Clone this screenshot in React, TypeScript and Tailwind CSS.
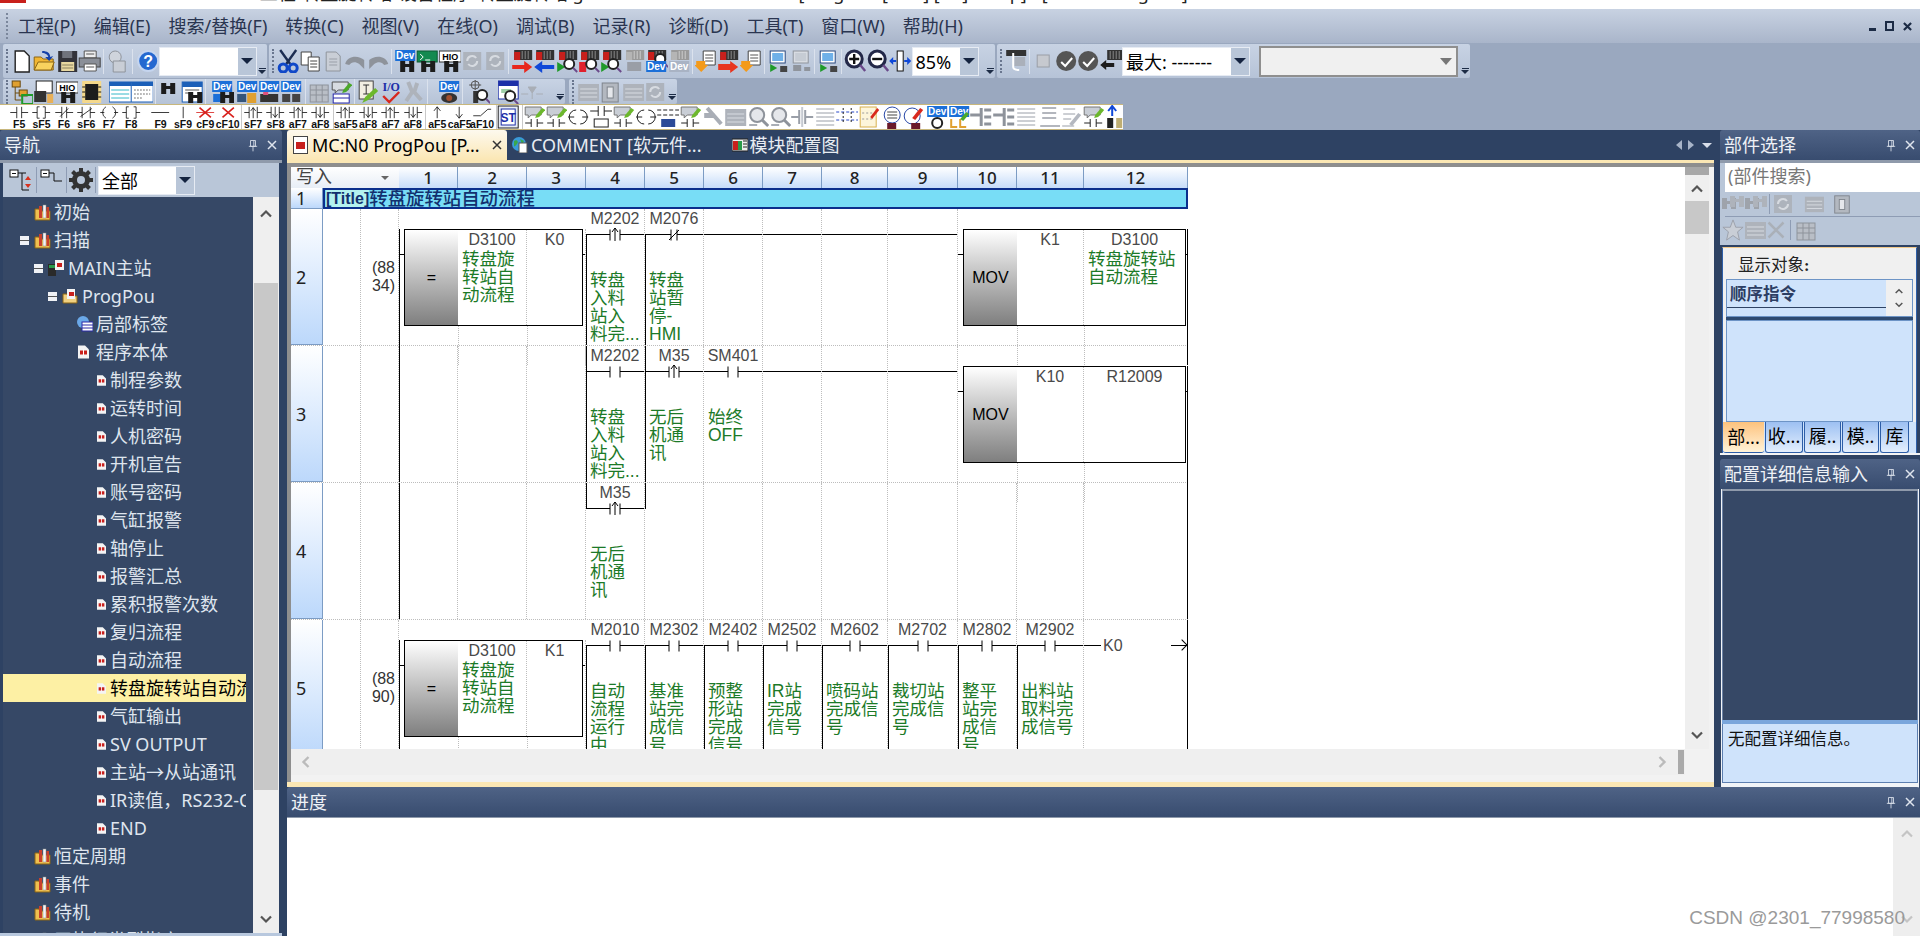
import type { ReactNode } from 'react';

// ---- toolbar icon parts ----
const Bino = ({ x = 4, y = 12, c = '#1c1c1c' }: { x?: number; y?: number; c?: string }) => (
  <g fill={c}>
    <rect x={x} y={y} width="5" height="11" />
    <rect x={x + 9} y={y} width="5" height="11" />
    <rect x={x + 4} y={y + 3} width="6" height="3" />
  </g>
);
const Dev = ({ x = 1, y = 1, c = '#1b6fd8' }: { x?: number; y?: number; c?: string }) => (
  <g>
    <rect x={x} y={y} width="20" height="11" fill={c} />
    <text x={x + 10} y={y + 9} fontSize="10" fontWeight="700" fill="#fff" textAnchor="middle" fontFamily="Liberation Sans">Dev</text>
  </g>
);
const Plc = ({ gray = false }: { gray?: boolean }) => (
  <g>
    <rect x="3" y="1" width="18" height="10" fill={gray ? '#9a9a9a' : '#333'} />
    <rect x="3" y="3" width="6" height="8" fill={gray ? '#b5b5b5' : '#c8201c'} />
    <path d="M11 2v8M14 2v8M17 2v8" stroke={gray ? '#ccc' : '#888'} />
  </g>
);
const GrayDoc = () => (
  <g>
    <path d="M4 3h10l4 4v15H4z" fill="#c9ced6" stroke="#8f949c" />
    <path d="M7 10h8M7 13h8M7 16h8" stroke="#9a9fa8" />
  </g>
);
const Mag = ({ x = 11, y = 12 }: { x?: number; y?: number }) => (
  <g>
    <circle cx={x} cy={y} r="5" fill="#fff" stroke="#222" strokeWidth="2" />
    <path d={`M${x + 4} ${y + 4}l4 4`} stroke="#6b4a8a" strokeWidth="2" />
  </g>
);
const Monitor = ({ gray = false }: { gray?: boolean }) => (
  <g>
    <rect x="3" y="2" width="15" height="12" fill={gray ? '#d8dce2' : '#fff'} stroke={gray ? '#8f949c' : '#2b4a80'} />
    <rect x="5" y="4" width="11" height="8" fill={gray ? '#c6ccd4' : '#6fb0e8'} />
    {gray ? <path d="M3 16h8v6H3zM14 18h6v4h-6z" fill="#8f949c" /> : <path d="M3 15v8l7-4z" fill="#1f9a2a" />}
    {!gray && <rect x="13" y="17" width="7" height="6" fill="#444" />}
  </g>
);
const OrangeDoc = () => (
  <g>
    <path d="M8 2h12v14H8z" fill="#fff" stroke="#444" />
    <path d="M10 6h8M10 9h8M10 12h8" stroke="#555" />
    <path d="M1 12h9v4h3l-7 7-7-7h2z" fill="#f39a1a" />
  </g>
);

const icons: Record<string, ReactNode> = {
  doc: <path d="M4 2h9l5 5v16H4z" fill="#fff" stroke="#222" strokeWidth="1.4" />,
  folder: (
    <g>
      <path d="M1 21V8h7l2 2h10v11z" fill="#f2b632" stroke="#8a6414" />
      <path d="M1 21l4-8h16l-3 8z" fill="#f9d25e" stroke="#8a6414" />
      <path d="M9 2c5 0 8 2 8 6l3-1-4 5-4-4 3 0c0-2-3-4-6-4z" fill="#1541a8" />
    </g>
  ),
  save: (
    <g>
      <rect x="2" y="2" width="19" height="21" fill="#33333a" />
      <rect x="5" y="13" width="13" height="9" fill="#e8d8a0" />
      <path d="M6 16h11M6 19h11" stroke="#8a8060" />
      <rect x="6" y="2" width="10" height="7" fill="#70737c" />
    </g>
  ),
  print: (
    <g>
      <path d="M6 2h12v7H6z" fill="#eee" stroke="#555" />
      <rect x="1" y="9" width="21" height="9" fill="#8a8f98" stroke="#444" />
      <path d="M6 15h12v7H6z" fill="#fff" stroke="#555" />
      <path d="M8 5h8M8 18h8" stroke="#555" />
    </g>
  ),
  gdoc: <GrayDoc />,
  gclock: (
    <g>
      <circle cx="9" cy="8" r="6" fill="#cfd4dc" stroke="#8f949c" />
      <path d="M7 12h12v11H7z" fill="#c9ced6" stroke="#8f949c" />
    </g>
  ),
  help: (
    <g>
      <circle cx="11" cy="12" r="10" fill="#2468d0" stroke="#c5d5ef" strokeWidth="2" />
      <text x="11" y="18" fontSize="16" fontWeight="700" fill="#fff" textAnchor="middle" fontFamily="Liberation Sans">?</text>
    </g>
  ),
  cut: (
    <g>
      <path d="M3 1l10 14M19 1L9 15" stroke="#1c2d52" strokeWidth="2.4" />
      <circle cx="6" cy="19" r="4" fill="none" stroke="#1048c8" strokeWidth="3" />
      <circle cx="16" cy="19" r="4" fill="none" stroke="#1048c8" strokeWidth="3" />
    </g>
  ),
  copy: (
    <g>
      <path d="M2 3h10v13H2z" fill="#fff" stroke="#444" />
      <path d="M9 8h11v14H9z" fill="#fff" stroke="#444" />
      <path d="M11 12h7M11 15h7M11 18h7" stroke="#444" />
    </g>
  ),
  gundo: <path d="M1 15c2-9 14-9 19-4v9l-5-5c-4-3-8-2-10 1l-4-1z" fill="#8e939b" />,
  gredo: <path d="M21 15c-2-9-14-9-19-4v9l5-5c4-3 8-2 10 1l4-1z" fill="#8e939b" />,
  devBino: (<g><Dev /><Bino x={6} /></g>),
  devBlue: (<g><Dev /><rect x="2" y="14" width="9" height="8" fill="#1b6fd8" /><Bino x={9} /></g>),
  green: (
    <g>
      <rect x="1" y="2" width="20" height="11" fill="#148a50" stroke="#0c5a33" />
      <path d="M4 5l3 3-3 3M9 11h5" stroke="#fff" fill="none" />
      <Bino x={5} />
    </g>
  ),
  hio: (
    <g>
      <rect x="0" y="2" width="22" height="11" fill="#fff" stroke="#333" />
      <text x="11" y="11" fontSize="9" fontWeight="700" textAnchor="middle" fontFamily="Liberation Sans">HIO</text>
      <Bino x={5} />
    </g>
  ),
  gcycle: (
    <g>
      <rect x="2" y="3" width="18" height="18" fill="#adb3bc" />
      <path d="M6 12a5 5 0 0 1 9-3M16 12a5 5 0 0 1-9 3" stroke="#d7dbe1" strokeWidth="2" fill="none" />
    </g>
  ),
  plcRed: (<g><Plc /><path d="M1 16h12v-4l8 6-8 6v-4H1z" fill="#e8281e" /></g>),
  plcBlue: (<g><Plc /><path d="M21 16H9v-4l-8 6 8 6v-4h12z" fill="#1048d8" /></g>),
  plcMag: (<g><Plc /><path d="M1 13v10l8-5z" fill="#1f9a2a" /><Mag x={13} y={15} /></g>),
  plcMag2: (<g><Plc /><rect x="1" y="13" width="7" height="10" fill="#e0202c" /><Mag x={13} y={15} /></g>),
  plcGray: (<g><Plc gray /><rect x="4" y="13" width="14" height="9" fill="#9a9ea6" /></g>),
  devPlc: (<g><Plc /><Mag x={15} y={10} /><Dev y={12} /></g>),
  devGray: (<g><Plc gray /><Dev y={12} c="#a9b3c4" /></g>),
  orange: <OrangeDoc />,
  redPlc: (
    <g>
      <Plc />
      <path d="M1 15h12v-3l8 6-8 6v-3H1z" fill="#e8341e" />
    </g>
  ),
  monitor: <Monitor />,
  gmonitor: <Monitor gray />,
  zoomIn: (
    <g>
      <circle cx="10" cy="10" r="8" fill="#fff" stroke="#232848" strokeWidth="3" />
      <path d="M5 10h10M10 5v10" stroke="#111" strokeWidth="2.4" />
      <path d="M16 16l5 6" stroke="#6b4a8a" strokeWidth="2.4" />
    </g>
  ),
  zoomOut: (
    <g>
      <circle cx="10" cy="10" r="8" fill="#fff" stroke="#232848" strokeWidth="3" />
      <path d="M5 10h10" stroke="#111" strokeWidth="2.4" />
      <path d="M16 16l5 6" stroke="#6b4a8a" strokeWidth="2.4" />
    </g>
  ),
  fit: (
    <g>
      <rect x="8" y="2" width="6" height="20" fill="#fff" stroke="#111" />
      <path d="M0 12l4-4v3h3v2H4v3zM22 12l-4-4v3h-3v2h3v3z" fill="#1048d8" />
    </g>
  ),
  link: (
    <g>
      <rect x="1" y="1" width="20" height="6" fill="#333" />
      <rect x="9" y="8" width="11" height="9" fill="#aab0ba" />
      <path d="M8 4v14c0 3 3 3 6 3" stroke="#fff" strokeWidth="2" fill="none" />
    </g>
  ),
  gsquare: <rect x="5" y="6" width="12" height="12" fill="#c6c9cf" stroke="#9a9ea6" />,
  check: (
    <g>
      <circle cx="11" cy="12" r="10" fill="#555" />
      <path d="M6 13l4 4 7-8" stroke="#fff" strokeWidth="2" fill="none" />
    </g>
  ),
  plcArrow: (
    <g>
      <rect x="7" y="1" width="15" height="10" fill="#333" />
      <path d="M10 2v8M13 2v8M16 2v8M19 2v8" stroke="#888" />
      <path d="M0 16l6-5v3h8v4H6v3z" fill="#1c1c1c" />
    </g>
  ),
  tree: (
    <g>
      <rect x="1" y="1" width="8" height="6" fill="#e0a030" stroke="#6a4a10" />
      <rect x="8" y="10" width="8" height="6" fill="#e0a030" stroke="#6a4a10" />
      <path d="M4 7v13h6M4 13h4" stroke="#6a4a10" fill="none" />
      <rect x="11" y="15" width="11" height="9" fill="none" stroke="#1f9a2a" strokeWidth="2" />
    </g>
  ),
  printer2: (
    <g>
      <rect x="3" y="1" width="16" height="12" fill="#fff" stroke="#222" />
      <rect x="1" y="11" width="12" height="11" fill="#333" />
      <rect x="14" y="14" width="6" height="9" fill="#e8b058" />
    </g>
  ),
  chip: (
    <g>
      <rect x="2" y="1" width="19" height="22" fill="#f4d88a" />
      <rect x="5" y="4" width="13" height="16" fill="#1c1c1c" />
      <path d="M2 7h3M2 12h3M2 17h3M18 7h3M18 12h3M18 17h3" stroke="#1c1c1c" />
    </g>
  ),
  tableA: (
    <g>
      <rect x="0" y="2" width="22" height="20" fill="#fff" stroke="#1b5fb8" />
      <rect x="0" y="2" width="22" height="4" fill="#1b5fb8" />
      <path d="M2 10h18M2 14h18M2 18h18" stroke="#35b8c8" />
    </g>
  ),
  tableB: (
    <g>
      <rect x="0" y="2" width="22" height="20" fill="#fff" stroke="#1b5fb8" />
      <rect x="0" y="2" width="22" height="4" fill="#1b5fb8" />
      <path d="M3 10h16M3 14h16M3 18h9" stroke="#555" strokeDasharray="1.5 1.5" />
    </g>
  ),
  bino: <Bino x={3} y={3} />,
  gbino: (<g><Bino x={0} y={6} c="#9ea3ab" /><Bino x={8} y={4} c="#aeb3bb" /></g>),
  winBino: (
    <g>
      <rect x="1" y="2" width="20" height="20" fill="#fff" stroke="#1b5fb8" />
      <rect x="1" y="2" width="20" height="5" fill="#1b5fb8" />
      <path d="M4 10h14M4 13h6" stroke="#555" />
      <Bino x={7} y={12} />
    </g>
  ),
  dev3: (<g><Dev /><rect x="1" y="14" width="9" height="8" fill="#35557a" /><rect x="11" y="13" width="9" height="10" fill="#e0a030" /></g>),
  dev4: (<g><Dev /><rect x="2" y="14" width="18" height="8" fill="#333" /><rect x="5" y="12" width="5" height="3" fill="#e0507a" /></g>),
  dev5: (<g><Dev /><rect x="2" y="14" width="8" height="8" fill="#444" /><rect x="12" y="14" width="8" height="8" fill="#444" /></g>),
  gtable: (<g><rect x="2" y="5" width="18" height="17" fill="#b9bec6" stroke="#8e939b" /><path d="M2 10h18M2 15h18M8 5v17M14 5v17" stroke="#8e939b" /></g>),
  note: (
    <g>
      <path d="M2 2h16v8H8l-3 3v-3H2z" fill="#d7dbe1" stroke="#555" />
      <rect x="3" y="14" width="16" height="9" fill="#fff" stroke="#2828a8" />
      <path d="M3 18h16" stroke="#2828a8" />
      <path d="M13 10l6-7 3 2-6 7-4 1z" fill="#4ca82a" />
    </g>
  ),
  edit: (
    <g>
      <rect x="2" y="1" width="14" height="18" fill="#f2efe2" stroke="#444" />
      <path d="M6 5h6M9 5v9M6 14h6" stroke="#333" />
      <path d="M5 23l3-6 10-9 3 3-10 9z" fill="#6cb82c" />
    </g>
  ),
  io: (
    <g>
      <text x="11" y="11" fontSize="12" fontWeight="700" fill="#1c2fa8" textAnchor="middle" fontFamily="Liberation Serif">I/O</text>
      <path d="M3 16l6 6 10-10" stroke="#d8281e" strokeWidth="2.4" fill="none" />
    </g>
  ),
  gtool: (<g><path d="M6 2l4 10-6 9M15 3l-3 9 7 8" stroke="#aeb3bb" strokeWidth="4" fill="none" /></g>),
  devEye: (<g><Dev /><ellipse cx="11" cy="18" rx="8" ry="5" fill="#333" /><circle cx="11" cy="18" r="3" fill="#a05030" /></g>),
  probe: (
    <g>
      <circle cx="7" cy="5" r="4" fill="none" stroke="#555" />
      <path d="M1 5h12M7 0v10" stroke="#555" />
      <rect x="5" y="11" width="5" height="12" fill="#333" />
      <Mag x={14} y={15} />
    </g>
  ),
  winMag: (
    <g>
      <rect x="0" y="1" width="20" height="18" fill="#fff" stroke="#1c2fa8" />
      <rect x="0" y="1" width="20" height="5" fill="#1c2fa8" />
      <rect x="3" y="9" width="10" height="4" fill="#9fd0a8" />
      <Mag x={12} y={16} />
    </g>
  ),
  gline: <path d="M0 14h7M15 14h7M7 7h8l-4 6zM11 13v6" stroke="#a9aeb6" fill="#a9aeb6" />,
  gbars: (<g><rect x="1" y="4" width="21" height="17" fill="#aeb3bb" /><path d="M3 9h17M3 13h17M3 17h17" stroke="#d8dce2" /></g>),
  gbox: (<g><rect x="3" y="3" width="16" height="19" fill="#b3b8c0" stroke="#7f848c" /><rect x="8" y="7" width="6" height="11" fill="#e5e7eb" stroke="#7f848c" /></g>),
  stBox: (
    <g>
      <rect x="1" y="1" width="20" height="22" fill="#e6ebf5" stroke="#222" />
      <rect x="4" y="4" width="14" height="16" fill="#fff" stroke="#1c2fa8" />
      <text x="11" y="17" fontSize="12" fontWeight="700" fill="#1c2fa8" textAnchor="middle" fontFamily="Liberation Sans">ST</text>
    </g>
  ),
  bars: (<g><path d="M0 5h22M0 10h22" stroke="#222" strokeDasharray="4 2" /><rect x="4" y="14" width="14" height="8" fill="#2b4a98" /></g>),
  noteGray: (
    <g>
      <path d="M2 2h16v8H8l-3 3v-3H2z" fill="#c9ced6" stroke="#777" />
      <path d="M13 10l6-7 3 2-6 7-4 1z" fill="#6cb82c" />
      <path d="M2 18h6M14 18h6M8 14v8M14 14v8" stroke="#222" />
    </g>
  ),
  fb: (<g><path d="M0 6h8M14 6h8M8 1v10M14 1v10" stroke="#222" /><rect x="4" y="14" width="14" height="8" fill="#fff" stroke="#222" /></g>),
  coilN: (<g><path d="M1 12h6M15 12h6" stroke="#222" /><path d="M9 5a7 7 0 0 0 0 14M13 5a7 7 0 0 1 0 14" stroke="#222" fill="none" /></g>),
  hammer: (<g><rect x="2" y="8" width="10" height="5" fill="#a9aeb6" /><path d="M5 3l14 16" stroke="#a9aeb6" strokeWidth="4" /></g>),
  gmag: (<g><circle cx="10" cy="10" r="7" fill="#e5e7eb" stroke="#8e939b" strokeWidth="2" /><path d="M15 15l6 6" stroke="#8e939b" strokeWidth="3" /><path d="M2 20h8" stroke="#a9aeb6" strokeWidth="2" /></g>),
  glines: (<g><path d="M2 4h18M2 8h18M2 12h18M2 16h18M2 20h18" stroke="#9a9fa8" /></g>),
  gcontact: (<g><path d="M0 12h8M14 12h8M8 5v14M14 5v14" stroke="#9a9fa8" strokeWidth="2" /><path d="M11 2v20" stroke="#c5c9d0" strokeWidth="2" /></g>),
  blueLines: (<g><path d="M0 7h22M0 15h22" stroke="#2848c8" strokeDasharray="3 2" /><path d="M7 3v16M15 3v16" stroke="#222" strokeDasharray="2 2" /></g>),
  tagRed: (
    <g>
      <rect x="2" y="2" width="16" height="20" fill="#fdf5da" stroke="#d8b050" />
      <path d="M4 8h12M4 14h12" stroke="#999" strokeDasharray="2 2" />
      <path d="M12 12l7-9 2 2-7 9z" fill="#d8281e" />
    </g>
  ),
  circleDoc: (<g><circle cx="11" cy="10" r="8" fill="#fff" stroke="#2848a8" /><path d="M6 7h10M6 10h10M6 13h10" stroke="#444" /><rect x="6" y="18" width="9" height="6" fill="#6a1a2a" /></g>),
  circlePen: (<g><circle cx="9" cy="11" r="8" fill="#fff" stroke="#2848a8" /><path d="M9 13l8-10 3 2-8 10z" fill="#d8281e" /><rect x="8" y="18" width="9" height="6" fill="#6a1a2a" /></g>),
  devWhite: (<g><Dev /><circle cx="11" cy="18" r="5" fill="#fff" stroke="#222" strokeWidth="2" /></g>),
  devOrange: (<g><Dev /><path d="M3 14v8h6M12 14v8h6" stroke="#e0a030" strokeWidth="2" fill="none" /><path d="M12 14l6-7 3 2-6 7z" fill="#4ca82a" /></g>),
  gdash: (<g><path d="M0 10h10" stroke="#8e939b" strokeWidth="3" /><path d="M11 3v18" stroke="#8e939b" strokeWidth="3" /><path d="M14 5h7M14 12h7M14 19h7" stroke="#8e939b" strokeWidth="3" /></g>),
  gflag: (<g><path d="M4 3h14M4 8h14M4 13h14M2 21h20" stroke="#9a9fa8" strokeWidth="1.5" /></g>),
  gpen: (<g><path d="M3 4h12M3 9h12M3 14h8M2 21h12" stroke="#9a9fa8" /><path d="M9 19l9-11 3 2-9 11z" fill="#b4b8c0" /></g>),
  plcUp: (<g><path d="M7 1v10M3 6l4-5 4 5" stroke="#1048d8" strokeWidth="2" fill="none" /><rect x="2" y="13" width="6" height="10" fill="#222" /><rect x="11" y="13" width="6" height="10" fill="#bfae72" /></g>),
  plcDn: (<g><path d="M7 1v10M3 6l4 5 4-5" stroke="#d8281e" strokeWidth="2" fill="none" /><rect x="2" y="13" width="6" height="10" fill="#222" /><rect x="11" y="13" width="6" height="10" fill="#bfae72" /></g>),
};

const Ico = ({ n, w = 'w-[22.4px]' }: { n: string; w?: string }) => (
  <svg viewBox="0 0 22 24" className={`${w} h-[24px] shrink-0`}>
    {icons[n]}
  </svg>
);

const Sep = () => <div className="w-px h-[25px] mx-[2px] shrink-0 bg-[#8e9cb4] border-r border-[#dbe2ed]" />;
const Grip = () => <div className="w-[2px] h-[24px] mx-[3px] shrink-0 border-l-2 border-dotted border-[#69768e]" />;
const Overflow = ({ dark = false }: { dark?: boolean }) => (
  <div className={`w-[10px] self-stretch shrink-0 flex flex-col justify-end items-center pb-[4px] ${dark ? 'bg-[#c7d2e3]' : ''}`}>
    <div className="w-[7px] h-px bg-[#1c2b45] mb-[1px]" />
    <div className="w-0 h-0 border-x-[4px] border-t-[4px] border-x-transparent border-t-[#1c2b45]" />
  </div>
);
const Combo = ({ text, w, arrow = 'w-[18px]' }: { text: string; w: string; arrow?: string }) => (
  <div className={`${w} h-[29px] shrink-0 bg-white flex items-stretch border border-[#e6ebf3]`}>
    <div className="flex-1 text-[18px] leading-[28px] pl-[3px] text-black overflow-hidden whitespace-nowrap">{text}</div>
    <div className={`${arrow} bg-[#b9c6d8] flex items-center justify-center`}>
      <div className="w-0 h-0 border-x-[6px] border-t-[6px] border-x-transparent border-t-[#14233f]" />
    </div>
  </div>
);

const Group = ({ children, w }: { children: ReactNode; w: string }) => (
  <div className={`${w} h-full flex items-center bg-gradient-to-b from-[#c8d3e4] to-[#b6c3d7] rounded-[2px] shrink-0`}>{children}</div>
);

const menus = ['工程(P)', '编辑(E)', '搜索/替换(F)', '转换(C)', '视图(V)', '在线(O)', '调试(B)', '记录(R)', '诊断(D)', '工具(T)', '窗口(W)', '帮助(H)'];

function Menu() {
  return (
    <div className="h-[34px] flex items-center bg-gradient-to-b from-[#c8d2e2] to-[#a9b5ca] shrink-0">
      <div className="w-[2px] h-[26px] ml-[6px] mr-[10px] border-l-2 border-dotted border-[#7b879c]" />
      <div className="flex gap-[18px] text-[18px] text-[#2a3550]">
        {menus.map((m) => (
          <span key={m} className="whitespace-nowrap">{m}</span>
        ))}
      </div>
      <div className="ml-auto flex items-center gap-[9px] pr-[8px]">
        <div className="w-[7px] h-[3px] bg-[#1c2b45] mt-[6px]" />
        <div className="w-[9px] h-[10px] border-2 border-[#1c2b45]" />
        <svg viewBox="0 0 10 10" className="w-[9px] h-[9px]"><path d="M1 1l8 8M9 1l-8 8" stroke="#1c2b45" strokeWidth="2.4" /></svg>
      </div>
    </div>
  );
}

function Row1() {
  return (
    <div className="h-[34px] mt-px flex gap-[2px] pl-[3px] shrink-0">
      <Group w="w-[264px]">
        <Grip />
        <Ico n="doc" />
        <Ico n="folder" />
        <Ico n="save" />
        <Ico n="print" />
        <Sep />
        <Ico n="gclock" />
        <div className="w-[2px]" />
        <Sep />
        <div className="w-[2px]" />
        <Ico n="help" />
        <Combo text="" w="w-[98px]" />
        <div className="flex-1" />
        <Overflow />
      </Group>
      <Group w="w-[726px]">
        <Grip />
        <Ico n="cut" />
        <Ico n="copy" />
        <Ico n="gdoc" />
        <Ico n="gundo" />
        <Ico n="gredo" />
        <Sep />
        <Ico n="devBino" />
        <Ico n="green" />
        <Ico n="hio" />
        <Ico n="gcycle" />
        <Ico n="gcycle" />
        <Sep />
        <Ico n="plcRed" />
        <Ico n="plcBlue" />
        <Ico n="plcMag" />
        <Ico n="plcMag2" />
        <Ico n="plcMag" />
        <Ico n="plcGray" />
        <Ico n="devPlc" />
        <Ico n="devGray" />
        <Sep />
        <Ico n="orange" />
        <Ico n="redPlc" />
        <Ico n="orange" />
        <Sep />
        <Ico n="monitor" />
        <Ico n="gmonitor" />
        <Sep />
        <Ico n="monitor" />
        <Sep />
        <Ico n="zoomIn" />
        <Ico n="zoomOut" />
        <Ico n="fit" />
        <Combo text="85%" w="w-[67px]" />
        <div className="flex-1" />
        <Overflow />
      </Group>
      <Group w="w-[473px]">
        <Grip />
        <Ico n="link" />
        <Sep />
        <Ico n="gsquare" />
        <Ico n="check" />
        <Ico n="check" />
        <Ico n="plcArrow" />
        <Combo text="最大: -------" w="w-[128px]" />
        <div className="w-[9px]" />
        <div className="w-[199px] h-[31px] shrink-0 bg-[#f0f0f0] border-2 border-[#8f8f8f] flex items-center justify-end pr-[4px]">
          <div className="w-0 h-0 border-x-[6px] border-t-[7px] border-x-transparent border-t-[#777]" />
        </div>
        <div className="flex-1" />
        <Overflow />
      </Group>
    </div>
  );
}

function Row2() {
  return (
    <div className="h-[25px] mt-px flex gap-[4px] pl-[3px] shrink-0">
      <Group w="w-[562px]">
        <Grip />
        <Ico n="tree" />
        <Ico n="printer2" />
        <Ico n="hio" />
        <div className="w-[2px] shrink-0" />
        <Ico n="chip" />
        <div className="w-[6px] shrink-0" />
        <Ico n="tableA" />
        <Ico n="tableB" />
        <Sep />
        <Ico n="bino" />
        <Ico n="winBino" />
        <Sep />
        <div className="w-[3px] shrink-0" />
        <Ico n="devBlue" />
        <div className="w-[2px] shrink-0" />
        <Ico n="dev3" />
        <Ico n="dev4" />
        <Ico n="dev5" />
        <Sep />
        <Ico n="gtable" />
        <Ico n="note" />
        <Sep />
        <Ico n="edit" />
        <Ico n="io" />
        <Ico n="gtool" />
        <Sep />
        <div className="w-[8px] shrink-0" />
        <Ico n="devEye" />
        <Sep />
        <div className="w-[3px] shrink-0" />
        <Ico n="probe" />
        <div className="w-[8px] shrink-0" />
        <Ico n="winMag" />
        <Ico n="gline" />
        <div className="flex-1" />
        <Overflow />
      </Group>
      <Group w="w-[108px]">
        <Grip />
        <Ico n="gbars" />
        <Ico n="gbox" />
        <Ico n="gbars" />
        <Ico n="gcycle" />
        <div className="flex-1" />
        <Overflow />
      </Group>
    </div>
  );
}

// F-key contact symbols, 22x16
const syms: Record<string, ReactNode> = {
  no: <path d="M0 8h8M14 8h8M8 1v14M14 1v14" stroke="#111" />,
  sno: <path d="M0 8h6M16 8h6M6 1v14M16 1v14M6 1h3M6 15h3M16 1h-3M16 15h-3" stroke="#111" />,
  nc: <path d="M0 8h8M14 8h8M8 1v14M14 1v14M6 13l10-10" stroke="#111" />,
  snc: <path d="M0 8h6M16 8h6M6 1v14M16 1v14M4 13l14-10" stroke="#111" />,
  coil: <path d="M0 8h5M17 8h5M7 1a8 8 0 0 0 0 14M15 1a8 8 0 0 1 0 14" stroke="#111" fill="none" />,
  fn: <path d="M0 8h5M17 8h5M8 1H5v14h3M14 1h3v14h-3" stroke="#111" fill="none" />,
  h: <path d="M0 8h22" stroke="#111" />,
  v: <path d="M11 1v14" stroke="#111" />,
  xh: <g><path d="M0 8h22" stroke="#d8201c" /><path d="M4 2l14 12M18 2L4 14" stroke="#d8201c" strokeWidth="2" /></g>,
  x: <path d="M4 2l14 12M18 2L4 14" stroke="#d8201c" strokeWidth="2" />,
  pu: <path d="M0 8h6M16 8h6M6 1v14M16 1v14M11 2v13M8 6l3-4 3 4" stroke="#111" fill="none" />,
  pd: <path d="M0 8h6M16 8h6M6 1v14M16 1v14M11 1v13M8 10l3 4 3-4" stroke="#111" fill="none" />,
  up: <path d="M11 1v14M7 6l4-5 4 5" stroke="#111" fill="none" />,
  dn: <path d="M11 1v14M7 10l4 5 4-5" stroke="#111" fill="none" />,
  ang: <path d="M0 12h9l9-8h4" stroke="#111" fill="none" />,
};

function FKey({ s, t }: { s: string; t: string }) {
  return (
    <div className="w-[22.4px] h-full flex flex-col items-center shrink-0">
      <svg viewBox="0 0 22 16" className="w-[22.4px] h-[15px] mt-px">{syms[s]}</svg>
      <div className="text-[10.5px] leading-[10px] font-bold text-[#111] whitespace-nowrap font-['Liberation_Sans',sans-serif]">{t}</div>
    </div>
  );
}

function Row3() {
  const r3 = ['noteGray', 'noteGray', 'coilN', 'fb', 'noteGray', 'coilN', 'bars', 'noteGray', 'hammer', 'gbars', 'gmag', 'gmag', 'gcontact', 'glines'];
  const r4 = ['tagRed', 'circleDoc', 'circlePen', 'devWhite', 'devOrange', 'gdash', 'gdash', 'glines', 'gflag', 'gpen', 'noteGray', 'plcUp', 'plcDn'];
  return (
    <div className="h-[26px] w-[1123px] flex items-center bg-white border-y border-[#c8b77c] shrink-0 overflow-hidden">
      <div className="w-[8px] shrink-0" />
      <FKey s="no" t="F5" />
      <FKey s="sno" t="sF5" />
      <FKey s="nc" t="F6" />
      <FKey s="snc" t="sF6" />
      <FKey s="coil" t="F7" />
      <FKey s="fn" t="F8" />
      <div className="w-[7px] shrink-0" />
      <FKey s="h" t="F9" />
      <FKey s="v" t="sF9" />
      <FKey s="xh" t="cF9" />
      <FKey s="x" t="cF10" />
      <div className="w-[3px] h-full border-r border-[#c9c9c9] shrink-0" />
      <FKey s="pu" t="sF7" />
      <FKey s="pd" t="sF8" />
      <FKey s="pu" t="aF7" />
      <FKey s="pd" t="aF8" />
      <div className="w-[3px] h-full border-r border-[#c9c9c9] shrink-0" />
      <FKey s="pu" t="saF5" />
      <FKey s="pd" t="aF8" />
      <FKey s="pu" t="aF7" />
      <FKey s="pd" t="aF8" />
      <div className="w-[2px] h-full border-r border-[#c9c9c9] shrink-0" />
      <FKey s="up" t="aF5" />
      <FKey s="dn" t="caF5" />
      <FKey s="ang" t="aF10" />
      <div className="w-[4px] h-full border-r border-[#c9c9c9] shrink-0" />
      <Ico n="stBox" />
      <div className="w-[3px] h-full border-r border-[#c9c9c9] shrink-0" />
      {r3.map((n, i) => (
        <Ico key={i} n={n} />
      ))}
      <Ico n="blueLines" />
      {r4.map((n, i) => (
        <Ico key={i} n={n} />
      ))}
      <div className="flex-1" />
      <Overflow dark />
    </div>
  );
}

// ---- docking panels ----
const Pin = () => (
  <svg viewBox="0 0 12 14" className="w-[10px] h-[13px]">
    <path d="M3 1h6v7H3zM1 8h10M6 8v6M7 1v7" stroke="#dfe5ee" fill="none" />
  </svg>
);
const Close = ({ c = '#dfe5ee' }: { c?: string }) => (
  <svg viewBox="0 0 10 10" className="w-[10px] h-[10px]">
    <path d="M1 1l8 8M9 1l-8 8" stroke={c} strokeWidth="1.5" />
  </svg>
);
function PanelHead({ title }: { title: string }) {
  return (
    <div className="h-[30px] shrink-0 flex items-center pl-[4px] pr-[5px] rounded-t-[3px] bg-gradient-to-b from-[#4f6386] to-[#384c6f] text-[18px] text-[#eef1f6]">
      <span className="flex-1 whitespace-nowrap">{title}</span>
      <div className="flex items-center gap-[9px]">
        <Pin />
        <Close />
      </div>
    </div>
  );
}
const Chev = ({ up, c = '#555', cls = 'w-[12px] h-[9px]' }: { up?: boolean; c?: string; cls?: string }) => (
  <svg viewBox="0 0 12 8" className={cls}>
    <path d={up ? 'M1 7l5-5 5 5' : 'M1 1l5 5 5-5'} stroke={c} strokeWidth="2.2" fill="none" />
  </svg>
);

const FolderIco = () => (
  <svg viewBox="0 0 17 17" className="w-[17px] h-[17px] shrink-0">
    <path d="M1 5h4l1 2h10v9H1z" fill="#f0c050" stroke="#8a6414" />
    <rect x="5" y="2" width="3" height="12" fill="#c8402c" />
    <rect x="9" y="1" width="3" height="13" fill="#f4f4f4" stroke="#888" strokeWidth=".5" />
    <rect x="12.5" y="3" width="2.5" height="11" fill="#c8402c" />
  </svg>
);
const LeafIco = ({ big = false }: { big?: boolean }) => (
  <svg viewBox="0 0 11 13" className={big ? 'w-[11px] h-[14px] shrink-0' : 'w-[9px] h-[11px] shrink-0'}>
    <path d="M0 0h7l4 4v9H0z" fill="#f4f4f4" />
    <rect x="2" y="5" width="7" height="4" fill="#c8201c" />
    <path d="M5.5 4v6" stroke="#fff" />
  </svg>
);
const Collapse = () => (
  <div className="w-[9px] h-[9px] bg-[#f0f2f6] border-y-[3px] border-[#f0f2f6] shrink-0 flex items-center">
    <div className="w-full h-px bg-[#555]" />
  </div>
);

type Node = { t: string; k: 'folder' | 'station' | 'pou' | 'label' | 'body' | 'leaf'; box?: boolean; sel?: boolean };
const tree: Node[] = [
  { t: '初始', k: 'folder' },
  { t: '扫描', k: 'folder', box: true },
  { t: 'MAIN主站', k: 'station', box: true },
  { t: 'ProgPou', k: 'pou', box: true },
  { t: '局部标签', k: 'label' },
  { t: '程序本体', k: 'body' },
  { t: '制程参数', k: 'leaf' },
  { t: '运转时间', k: 'leaf' },
  { t: '人机密码', k: 'leaf' },
  { t: '开机宣告', k: 'leaf' },
  { t: '账号密码', k: 'leaf' },
  { t: '气缸报警', k: 'leaf' },
  { t: '轴停止', k: 'leaf' },
  { t: '报警汇总', k: 'leaf' },
  { t: '累积报警次数', k: 'leaf' },
  { t: '复归流程', k: 'leaf' },
  { t: '自动流程', k: 'leaf' },
  { t: '转盘旋转站自动流程', k: 'leaf', sel: true },
  { t: '气缸输出', k: 'leaf' },
  { t: 'SV OUTPUT', k: 'leaf' },
  { t: '主站→从站通讯', k: 'leaf' },
  { t: 'IR读值，RS232-CRC校验', k: 'leaf' },
  { t: 'END', k: 'leaf' },
  { t: '恒定周期', k: 'folder' },
  { t: '事件', k: 'folder' },
  { t: '待机', k: 'folder' },
  { t: '无执行类型指定', k: 'folder' },
];
const indent: Record<Node['k'], string> = {
  folder: 'pl-[17px]',
  station: 'pl-[31px]',
  pou: 'pl-[45px]',
  label: 'pl-[60px]',
  body: 'pl-[61px]',
  leaf: 'pl-[80px]',
};
const textGap: Record<Node['k'], string> = {
  folder: 'ml-[3px]',
  station: 'ml-[4px]',
  pou: 'ml-[4px]',
  label: 'ml-[3px]',
  body: 'ml-[7px]',
  leaf: 'ml-[4px]',
};

function TreeIcon({ k }: { k: Node['k'] }) {
  if (k === 'folder') return <FolderIco />;
  if (k === 'leaf') return <LeafIco />;
  if (k === 'body') return <LeafIco big />;
  if (k === 'label') {
    return (
      <svg viewBox="0 0 16 16" className="w-[16px] h-[16px] shrink-0">
        <circle cx="6" cy="6" r="6" fill="#6aa8e8" />
        <rect x="5" y="6" width="11" height="9" fill="#fff" stroke="#2a2aa8" />
        <path d="M5 9h11M5 12h11" stroke="#2a2aa8" />
      </svg>
    );
  }
  if (k === 'station') {
    return (
      <svg viewBox="0 0 16 16" className="w-[16px] h-[16px] shrink-0">
        <rect x="0" y="4" width="8" height="12" fill="#2a2a2a" />
        <rect x="1" y="5" width="6" height="3" fill="#2a9a4a" />
        <rect x="7" y="0" width="9" height="10" fill="#f4f4f4" />
        <rect x="9" y="3" width="5" height="4" fill="#c8201c" />
      </svg>
    );
  }
  return (
    <svg viewBox="0 0 16 16" className="w-[16px] h-[16px] shrink-0">
      <path d="M1 6h4l1 2h9v7H1z" fill="#f0d080" stroke="#8a6414" />
      <rect x="5" y="1" width="8" height="10" fill="#f4f4f4" />
      <rect x="7" y="4" width="5" height="4" fill="#c8201c" />
    </svg>
  );
}

function TreeRow({ n }: { n: Node }) {
  return (
    <div className={`h-[28px] w-[243px] shrink-0 flex items-center overflow-hidden whitespace-nowrap text-[18px] ${indent[n.k]} ${n.sel ? 'bg-[#fdf0a4] text-black' : 'text-[#dfe5ee]'}`}>
      <div className="w-[14px] shrink-0 flex items-center">{n.box && <Collapse />}</div>
      <TreeIcon k={n.k} />
      <span className={textGap[n.k]}>{n.t}</span>
    </div>
  );
}

function NavPanel() {
  return (
    <div className="w-[282px] mr-[5px] shrink-0 h-full flex flex-col overflow-hidden">
      <PanelHead title="导航" />
      <div className="h-[3px] shrink-0 bg-[#8f9aab]" />
      <div className="h-[34px] shrink-0 ml-[3px] mr-[3px] flex items-center bg-[#b9c6d8] pl-[6px]">
        <svg viewBox="0 0 24 24" className="w-[24px] h-[24px] shrink-0">
          <rect x="1" y="2" width="8" height="7" fill="#fff" stroke="#111" />
          <path d="M3 5.500h4M9 5h8M13 5v17M13 22h7" stroke="#111" fill="none" />
          <path d="M19 8l-3 4h6zM19 20l-3-4h6z" fill="#d8301c" />
        </svg>
        <div className="w-px h-[26px] mx-[3px] bg-[#8e9cb4]" />
        <svg viewBox="0 0 24 24" className="w-[24px] h-[24px] shrink-0">
          <rect x="1" y="2" width="8" height="7" fill="#fff" stroke="#111" />
          <path d="M3 5.500h4M9 5h5M14 5v8h8" stroke="#111" fill="none" />
        </svg>
        <div className="w-px h-[26px] mx-[2px] bg-[#8e9cb4]" />
        <svg viewBox="0 0 24 24" className="w-[24px] h-[24px] shrink-0">
          <circle cx="12" cy="12" r="6.500" fill="none" stroke="#333" strokeWidth="5" />
          <path d="M12 0v5M12 19v5M0 12h5M19 12h5M3.500 3.500l3.500 3.500M17 17l3.500 3.500M20.500 3.500L17 7M7 17l-3.500 3.500" stroke="#333" strokeWidth="4" />
        </svg>
        <div className="w-px h-[26px] mx-[2px] bg-[#8e9cb4]" />
        <Combo text="全部" w="w-[97px]" />
      </div>
      <div className="flex-1 min-h-0 ml-[3px] mr-[3px] flex bg-[#364866]">
        <div className="flex-1 flex flex-col overflow-hidden pt-px">
          {tree.map((n) => (
            <TreeRow key={n.t} n={n} />
          ))}
        </div>
        <div className="w-[26px] shrink-0 flex flex-col bg-[#efefef] items-center">
          <div className="h-[86px] pt-[12px] shrink-0"><Chev up /></div>
          <div className="h-[507px] w-[24px] shrink-0 bg-[#c8c8c8]" />
          <div className="flex-1 flex items-end pb-[9px]"><Chev /></div>
        </div>
      </div>
      <div className="h-[3px] shrink-0 bg-[#b8c8de]" />
    </div>
  );
}

function Tabs() {
  return (
    <div className="h-[30px] shrink-0 flex items-stretch text-[18px] text-[#e8ecf2]">
      <div className="w-[220px] flex items-center bg-gradient-to-b from-[#fdf9ee] to-[#fbe7b4] rounded-t-[3px] text-black pl-[6px] pr-[5px]">
        <div className="w-[15px] h-[18px] bg-white border border-[#444] flex items-center justify-center shrink-0">
          <div className="w-[9px] h-[7px] bg-[#c8201c]" />
        </div>
        <span className="flex-1 ml-[4px] whitespace-nowrap">MC:N0 ProgPou [P...</span>
        <Close c="#333" />
      </div>
      <div className="w-[5px]" />
      <svg viewBox="0 0 16 16" className="w-[16px] h-[16px] self-center shrink-0">
        <circle cx="7" cy="7" r="7" fill="#3a9ad8" />
        <path d="M2 4c3-2 5 1 3 3s-2 3-3 2zM8 2l4 2-2 3z" fill="#3aa84a" />
        <rect x="7" y="6" width="8" height="10" fill="#fff" stroke="#555" />
      </svg>
      <span className="ml-[3px] self-center whitespace-nowrap">COMMENT [软元件...</span>
      <svg viewBox="0 0 16 16" className="w-[16px] h-[16px] self-center shrink-0 ml-[30px]">
        <rect x="0" y="2" width="16" height="12" fill="#eee" stroke="#222" />
        <rect x="1" y="4" width="5" height="9" fill="#c8201c" />
        <rect x="6" y="4" width="4" height="9" fill="#2a9a4a" />
        <path d="M11 4h4M11 7h4M11 10h4" stroke="#222" />
      </svg>
      <span className="ml-[2px] self-center whitespace-nowrap">模块配置图</span>
      <div className="flex-1" />
      <div className="flex items-center gap-[6px] pr-[2px]">
        <div className="w-0 h-0 border-y-[5px] border-r-[6px] border-y-transparent border-r-[#a8b4c8]" />
        <div className="w-0 h-0 border-y-[5px] border-l-[6px] border-y-transparent border-l-[#a8b4c8]" />
        <div className="w-0 h-0 border-x-[5px] border-t-[5px] border-x-transparent border-t-[#d8deea] ml-[2px]" />
      </div>
    </div>
  );
}

// ---- ladder ----
const grid12 = 'grid grid-cols-[32px_38px_38px_59px_69px_59px_59px_59px_59px_59px_66px_70px_59px_67px_104px]';
const dotR = 'border-r border-dotted border-[#bdbdbd]';
const colLabels = ['1', '2', '3', '4', '5', '6', '7', '8', '9', '10', '11', '12'];

function Head() {
  return (
    <div className={`${grid12} grid-rows-[21px] h-[21px] shrink-0`}>
      <div className="col-span-3 flex items-center justify-between bg-gradient-to-b from-white to-[#e8eef6] pl-[5px] pr-[10px] text-[18px] leading-[21px] text-[#444]">
        <span>写入</span>
        <div className="w-0 h-0 border-x-[4px] border-t-[4px] border-x-transparent border-t-[#666]" />
      </div>
      {colLabels.map((c) => (
        <div key={c} className="text-center text-[17px] leading-[21px] text-[#222] bg-gradient-to-b from-white to-[#c6dcf9] border-r border-[#7c9cc4] font-['Noto_Sans',sans-serif] font-medium">
          {c}
        </div>
      ))}
    </div>
  );
}

const Num = ({ n }: { n: number }) => (
  <div className="h-full flex items-center pl-[5px] text-[18px] leading-[20px] text-[#222] bg-gradient-to-b from-white to-[#bcd8fb] border-b border-r border-[#7c9cc4] font-['Noto_Sans',sans-serif]">
    {n}
  </div>
);

const Wire = () => <div className="absolute top-[25px] left-0 right-0 h-px bg-black" />;
const Rail = () => <div className="absolute top-0 bottom-0 left-0 w-px bg-black" />;
const Comment = ({ t }: { t?: string }) =>
  t ? (
    <div className="text-[17.5px] leading-[18px] text-[#1c7a28] whitespace-pre">{t}</div>
  ) : null;

type Branch = 'down' | 'full' | 'up';
const bClass: Record<Branch, string> = {
  down: 'top-[25px] bottom-0',
  full: 'top-0 bottom-0',
  up: 'top-0 h-[26px]',
};

function Contact({ label, sym = 'no', comment, branch }: { label: string; sym?: 'no' | 'nc' | 'pu'; comment?: string; branch?: Branch }) {
  return (
    <div className={`relative h-full overflow-hidden ${dotR}`}>
      {branch && <div className={`absolute left-0 w-px bg-black ${bClass[branch]}`} />}
      <Wire />
      <div className="absolute top-[18px] inset-x-0 flex justify-center">
        <svg viewBox="0 0 24 15" className="w-[24px] h-[15px]">
          <rect x="7" y="0" width="10" height="15" fill="white" />
          {sym === 'no' && <path d="M7 2.500v11M17 2.500v11" stroke="#000" />}
          {sym === 'pu' && <path d="M0 7.500h7M17 7.500h7M7 2.500v11M17 2.500v11M12 1v13M9 5l3-4 3 4" stroke="#000" fill="none" />}
          {sym === 'nc' && <path d="M0 7.500h9M15 7.500h9M7 13l10-10M9 2.500v11M15 2.500v11" stroke="#000" fill="none" />}
        </svg>
      </div>
      <div className="text-[16px] leading-[20px] text-center text-[#4a4a4a] whitespace-nowrap">{label}</div>
      <div className="pl-[4px] pt-[42px]">
        <Comment t={comment} />
      </div>
    </div>
  );
}

const Blank = ({ wire, rail }: { wire?: boolean; rail?: boolean }) => (
  <div className={`relative h-full ${dotR}`}>
    {rail && <Rail />}
    {wire && <Wire />}
  </div>
);

function FnBox({ name, a, b, comA, comB, kind }: { name: string; a: string; b: string; comA?: string; comB?: string; kind: 'cmp' | 'mov' }) {
  const cols = kind === 'cmp' ? 'grid-cols-[53px_69px_1fr]' : 'grid-cols-[53px_67px_1fr]';
  return (
    <div className={`relative h-full ${kind === 'cmp' ? dotR : 'border-r border-black'}`}>
      {kind === 'cmp' && <Rail />}
      <div className="absolute top-0 bottom-0 left-[59px] border-l border-dotted border-[#bdbdbd]" />
      <div className={`absolute top-0 bottom-0 ${kind === 'cmp' ? 'left-[128px]' : 'left-[126px]'} border-l border-dotted border-[#bdbdbd]`} />
      <Wire />
      <div className={`relative mt-[20px] ${kind === 'cmp' ? 'ml-[5px] mr-[2px]' : 'ml-[5px] mr-px'} h-[97px] border border-black bg-white grid ${cols}`}>
        <div className="bg-gradient-to-b from-white to-[#7f7f7f] flex items-center justify-center text-[16px] text-black">{name}</div>
        <div className="border-r border-dotted border-[#bdbdbd] text-center text-[16px] leading-[20px] text-[#4a4a4a] whitespace-nowrap">
          <div>{a}</div>
          <div className="text-left pl-[4px]"><Comment t={comA} /></div>
        </div>
        <div className="text-center text-[16px] leading-[20px] text-[#4a4a4a] whitespace-nowrap">
          <div>{b}</div>
          <div className="text-left pl-[4px]"><Comment t={comB} /></div>
        </div>
      </div>
    </div>
  );
}

const Step = ({ t }: { t?: string }) => (
  <div className={`h-full ${dotR} flex items-center justify-end pr-[3px] text-[16px] leading-[18px] text-[#333] whitespace-pre text-left`}>{t}</div>
);

function Ladder() {
  const rungCls = `${grid12} grid-rows-[136px] h-[137px] shrink-0 border-b border-dotted border-[#bdbdbd]`;
  return (
    <div className="h-[582px] w-[897px] overflow-hidden shrink-0 flex flex-col font-['Liberation_Sans','Noto_Sans_CJK_SC',sans-serif]">
      <Head />
      <div className={`${grid12} grid-rows-[21px] h-[21px] shrink-0`}>
        <Num n={1} />
        <div className="col-span-14 h-[21px] overflow-hidden bg-[#78ddf6] border-2 border-[#0b2f8c] flex items-center text-[#12306e] whitespace-nowrap pl-[1px]">
          <span className="bg-[#b4f2ef] text-[16px] leading-[17px] font-bold">[Title]</span>
          <span className="text-[18.4px] leading-[17px] font-medium">转盘旋转站自动流程</span>
        </div>
      </div>
      <div className={rungCls}>
        <Num n={2} />
        <Step />
        <Step t={'(88\n34)'} />
        <div className="col-span-3 h-full"><FnBox kind="cmp" name="=" a="D3100" b="K0" comA={'转盘旋\n转站自\n动流程'} /></div>
        <Contact label="M2202" sym="pu" branch="down" comment={'转盘\n入料\n站入\n料完...'} />
        <Contact label="M2076" sym="nc" branch="down" comment={'转盘\n站暂\n停-\nHMI'} />
        <Blank wire />
        <Blank wire />
        <Blank wire />
        <Blank wire />
        <div className="col-span-3 h-full"><FnBox kind="mov" name="MOV" a="K1" b="D3100" comB={'转盘旋转站\n自动流程'} /></div>
      </div>
      <div className={rungCls}>
        <Num n={3} />
        <Step />
        <Step />
        <Blank rail />
        <Blank />
        <Blank />
        <Contact label="M2202" branch="full" comment={'转盘\n入料\n站入\n料完...'} />
        <Contact label="M35" sym="pu" branch="full" comment={'无后\n机通\n讯'} />
        <Contact label="SM401" comment={'始终\nOFF'} />
        <Blank wire />
        <Blank wire />
        <Blank wire />
        <div className="col-span-3 h-full"><FnBox kind="mov" name="MOV" a="K10" b="R12009" /></div>
      </div>
      <div className={rungCls}>
        <Num n={4} />
        <Step />
        <Step />
        <Blank rail />
        <Blank />
        <Blank />
        <Contact label="M35" sym="pu" branch="up" comment={'无后\n机通\n讯'} />
        <div className={`relative h-full ${dotR}`}>
          <div className={`absolute left-0 w-px bg-black ${bClass.up}`} />
        </div>
        <Blank />
        <Blank />
        <Blank />
        <Blank />
        <Blank />
        <Blank />
        <div className="h-full border-r border-black" />
      </div>
      <div className={rungCls}>
        <Num n={5} />
        <Step />
        <Step t={'(88\n90)'} />
        <div className="col-span-3 h-full"><FnBox kind="cmp" name="=" a="D3100" b="K1" comA={'转盘旋\n转站自\n动流程'} /></div>
        <Contact label="M2010" branch="down" comment={'自动\n流程\n运行\n中'} />
        <Contact label="M2302" branch="down" comment={'基准\n站完\n成信\n号'} />
        <Contact label="M2402" branch="down" comment={'预整\n形站\n完成\n信号'} />
        <Contact label="M2502" branch="down" comment={'IR站\n完成\n信号'} />
        <Contact label="M2602" branch="down" comment={'喷码站\n完成信\n号'} />
        <Contact label="M2702" branch="down" comment={'裁切站\n完成信\n号'} />
        <Contact label="M2802" branch="down" comment={'整平\n站完\n成信\n号'} />
        <Contact label="M2902" branch="down" comment={'出料站\n取料完\n成信号'} />
        <div className="relative h-full border-r border-black">
          <div className="absolute top-[25px] left-0 w-[17px] h-px bg-black" />
          <div className="absolute top-[16px] left-[19px] text-[16px] leading-[20px] text-[#4a4a4a]">K0</div>
          <div className="absolute top-[25px] right-0 w-[16px] h-px bg-black" />
          <div className="absolute top-[21px] right-[1px] w-[8px] h-[8px] border-t border-r border-black rotate-45" />
        </div>
      </div>
    </div>
  );
}

function Editor() {
  return (
    <div className="flex-1 min-w-0 flex flex-col">
      <Tabs />
      <div className="h-[3px] shrink-0 bg-[#fbe7b4]" />
      <div className="h-[619px] shrink-0 bg-[#f2f2f2] flex flex-col border-l-[4px] border-[#8e8e8e]">
        <div className="h-[4px] shrink-0 bg-[#8e8e8e]" />
        <div className="flex-1 min-h-0 flex flex-col">
          <div className="h-[582px] shrink-0 flex">
            <div className="flex-1 min-w-0 bg-white flex"><Ladder /></div>
            <div className="w-[24px] shrink-0 bg-[#efefef] flex flex-col items-center">
              <div className="h-[8px] w-full shrink-0 bg-[#a8a8a8]" />
              <div className="h-[26px] shrink-0 flex items-center"><Chev up /></div>
              <div className="h-[33px] w-full shrink-0 bg-[#c8c8c8]" />
              <div className="flex-1 flex items-end pb-[9px]"><Chev /></div>
            </div>
            <div className="w-[5px] shrink-0" />
          </div>
          <div className="h-[26px] shrink-0 flex items-center bg-[#efefef] mr-[29px]">
            <svg viewBox="0 0 8 12" className="w-[9px] h-[12px] ml-[10px]"><path d="M7 1L2 6l5 5" stroke="#bbb" strokeWidth="2.4" fill="none" /></svg>
            <div className="flex-1" />
            <svg viewBox="0 0 8 12" className="w-[9px] h-[12px]"><path d="M1 1l5 5-5 5" stroke="#bbb" strokeWidth="2.4" fill="none" /></svg>
            <div className="w-[6px] ml-[11px] mr-px h-[24px] bg-[#aaaaaa]" />
          </div>
          <div className="flex-1" />
        </div>
      </div>
      <div className="h-[5px] shrink-0 bg-[#fbe7b4]" />
    </div>
  );
}

function PartsPanel() {
  return (
    <div className="w-[200px] ml-[6px] shrink-0 flex flex-col">
      <PanelHead title="部件选择" />
      <div className="h-[3px] shrink-0 bg-[#8f9aab]" />
      <div className="h-[82px] shrink-0 bg-[#b9c6d8] pl-[2px] flex flex-col">
        <div className="h-[29px] ml-[3px] bg-white text-[18px] leading-[27px] text-[#777] pl-[3px] shrink-0">(部件搜索)</div>
        <div className="flex items-center h-[24px] gap-[1px]">
          <Ico n="gbino" w="w-[22px]" />
          <Ico n="gbino" w="w-[22px]" />
          <div className="w-px h-[20px] mx-px bg-[#8e9cb4]" />
          <Ico n="gcycle" w="w-[22px]" />
          <div className="w-[8px]" />
          <Ico n="gbars" w="w-[20px]" />
          <div className="w-[6px]" />
          <Ico n="gbox" w="w-[20px]" />
        </div>
        <div className="h-px ml-[3px] bg-[#8e9cb4]" />
        <div className="flex items-center h-[25px]">
          <svg viewBox="0 0 24 24" className="w-[22px] h-[22px]"><path d="M12 1l3 8h8l-6 5 2 9-7-5-7 5 2-9-6-5h8z" fill="#c9ced6" stroke="#9a9fa8" /></svg>
          <Ico n="gbars" w="w-[22px]" />
          <svg viewBox="0 0 16 16" className="w-[20px] h-[20px]"><path d="M2 2l12 12M14 2L2 14" stroke="#aab0b8" strokeWidth="2" /></svg>
          <div className="w-px h-[20px] mx-[4px] bg-[#8e9cb4]" />
          <Ico n="gtable" w="w-[22px]" />
        </div>
      </div>
      <div className="h-[2px] shrink-0" />
      <div className="h-[206px] shrink-0 ml-[2px] mr-[3px] flex flex-col bg-[#f0f0f0] border-x border-[#2d5ea8] border-t border-t-[#f2c98a]">
        <div className="h-[31px] shrink-0 pl-[15px] pt-[6px] flex items-center text-[16.5px] text-[#222] font-['Liberation_Serif','Noto_Sans_CJK_SC',serif]">
          显示对象<b>:</b>
        </div>
        <div className="h-[38px] shrink-0 mx-[3px] bg-[#cfe3fb] border border-[#6d94c6] flex overflow-hidden">
          <div className="flex-1 h-[28px] pl-[3px] border-b border-[#2e4263] text-[16.5px] leading-[27px] font-bold text-[#2d3e63]">顺序指令</div>
          <div className="w-[26px] bg-[#f0f0f0] flex flex-col items-center justify-around py-[4px]">
            <Chev up cls="w-[8px] h-[6px]" />
            <Chev cls="w-[8px] h-[6px]" />
          </div>
        </div>
        <div className="h-[3px] mx-[3px] shrink-0 bg-[#2e4a70]" />
        <div className="flex-1 mx-[3px] bg-[#cfe3fb] border border-[#6d94c6]" />
        <div className="h-[31px] shrink-0 flex gap-[1px] text-[18px] text-black bg-[#cfe3fb] pr-[5px] whitespace-nowrap">
          <div className="w-[41px] rounded-b-[3px] border-b border-[#2d5ea8] bg-gradient-to-b from-[#fdc27c] to-[#fff3d8] text-center leading-[30px]">部...</div>
          <div className="w-[38px] rounded-b-[3px] border border-t-0 border-[#2d5ea8] bg-gradient-to-b from-[#9dc0f2] to-[#e4effd] text-center leading-[28px]">收...</div>
          <div className="w-[37px] rounded-b-[3px] border border-t-0 border-[#2d5ea8] bg-gradient-to-b from-[#9dc0f2] to-[#e4effd] text-center leading-[28px]">履..</div>
          <div className="w-[37px] rounded-b-[3px] border border-t-0 border-[#2d5ea8] bg-gradient-to-b from-[#9dc0f2] to-[#e4effd] text-center leading-[28px]">模..</div>
          <div className="w-[29px] rounded-b-[3px] border border-t-0 border-[#2d5ea8] bg-gradient-to-b from-[#9dc0f2] to-[#e4effd] text-center leading-[28px]">库</div>
        </div>
      </div>
      <div className="h-[2px] shrink-0 bg-[#f4f4f4]" />
      <div className="h-[4px] shrink-0" />
      <PanelHead title="配置详细信息输入" />
      <div className="h-[299px] shrink-0 ml-[1px] mr-px bg-[#f2f4f7] px-px flex flex-col">
        <div className="h-[2px] shrink-0 bg-[#8f9aab]" />
        <div className="h-[229px] shrink-0 bg-[#364866] border-x border-[#6d84a8]" />
        <div className="h-[4px] shrink-0 bg-[#7aa6dc]" />
        <div className="h-[59px] shrink-0 bg-[#cfe3fb] border-x border-b border-[#5d7fb0] pl-[5px] pt-[3px] text-[16.5px] text-[#111]">无配置详细信息。</div>
      </div>
    </div>
  );
}

function ProgressPanel() {
  return (
    <div className="h-[149px] shrink-0 flex flex-col">
      <PanelHead title="进度" />
      <div className="h-px shrink-0 bg-[#8f9aab]" />
      <div className="flex-1 bg-white flex justify-end">
        <div className="w-[27px] bg-[#eeeeee] flex flex-col items-center justify-between pt-[11px] pb-[12px]">
          <Chev up c="#c4c4c4" />
          <Chev c="#c4c4c4" />
        </div>
      </div>
    </div>
  );
}

export default function App() {
  return (
    <div className="relative w-[1920px] h-[936px] overflow-hidden flex flex-col bg-[#2e4263] font-['Noto_Sans','Noto_Sans_CJK_SC',sans-serif]">
      <div className="h-[9px] shrink-0 bg-white flex overflow-hidden">
        <div className="w-[26px] h-[3px] bg-[#c8201c]" />
        <div className="ml-[209px] -mt-[17px] text-[18px] leading-[20px] text-[#222] whitespace-nowrap">
          D:\工程\转盘旋转站\设备程序\转盘旋转站.gx3 - MELSOFT GX Works3 [ProgPou [PRG] [LD] 5Step] - [MC:N0 ProgPou]
        </div>
      </div>
      <div className="h-[121px] shrink-0 flex flex-col bg-[#9aa8bf]">
        <Menu />
        <Row1 />
        <Row2 />
        <Row3 />
      </div>
      <div className="flex-1 min-h-0 flex">
        <NavPanel />
        <div className="flex-1 min-w-0 flex flex-col">
          <div className="h-[657px] shrink-0 flex">
            <Editor />
            <PartsPanel />
          </div>
          <ProgressPanel />
        </div>
      </div>
      <div className="absolute right-[15px] top-[907px] text-[19px] leading-[22px] text-[#9a9a9a] font-['Liberation_Sans',sans-serif] whitespace-nowrap">
        CSDN @2301_77998580
      </div>
    </div>
  );
}
